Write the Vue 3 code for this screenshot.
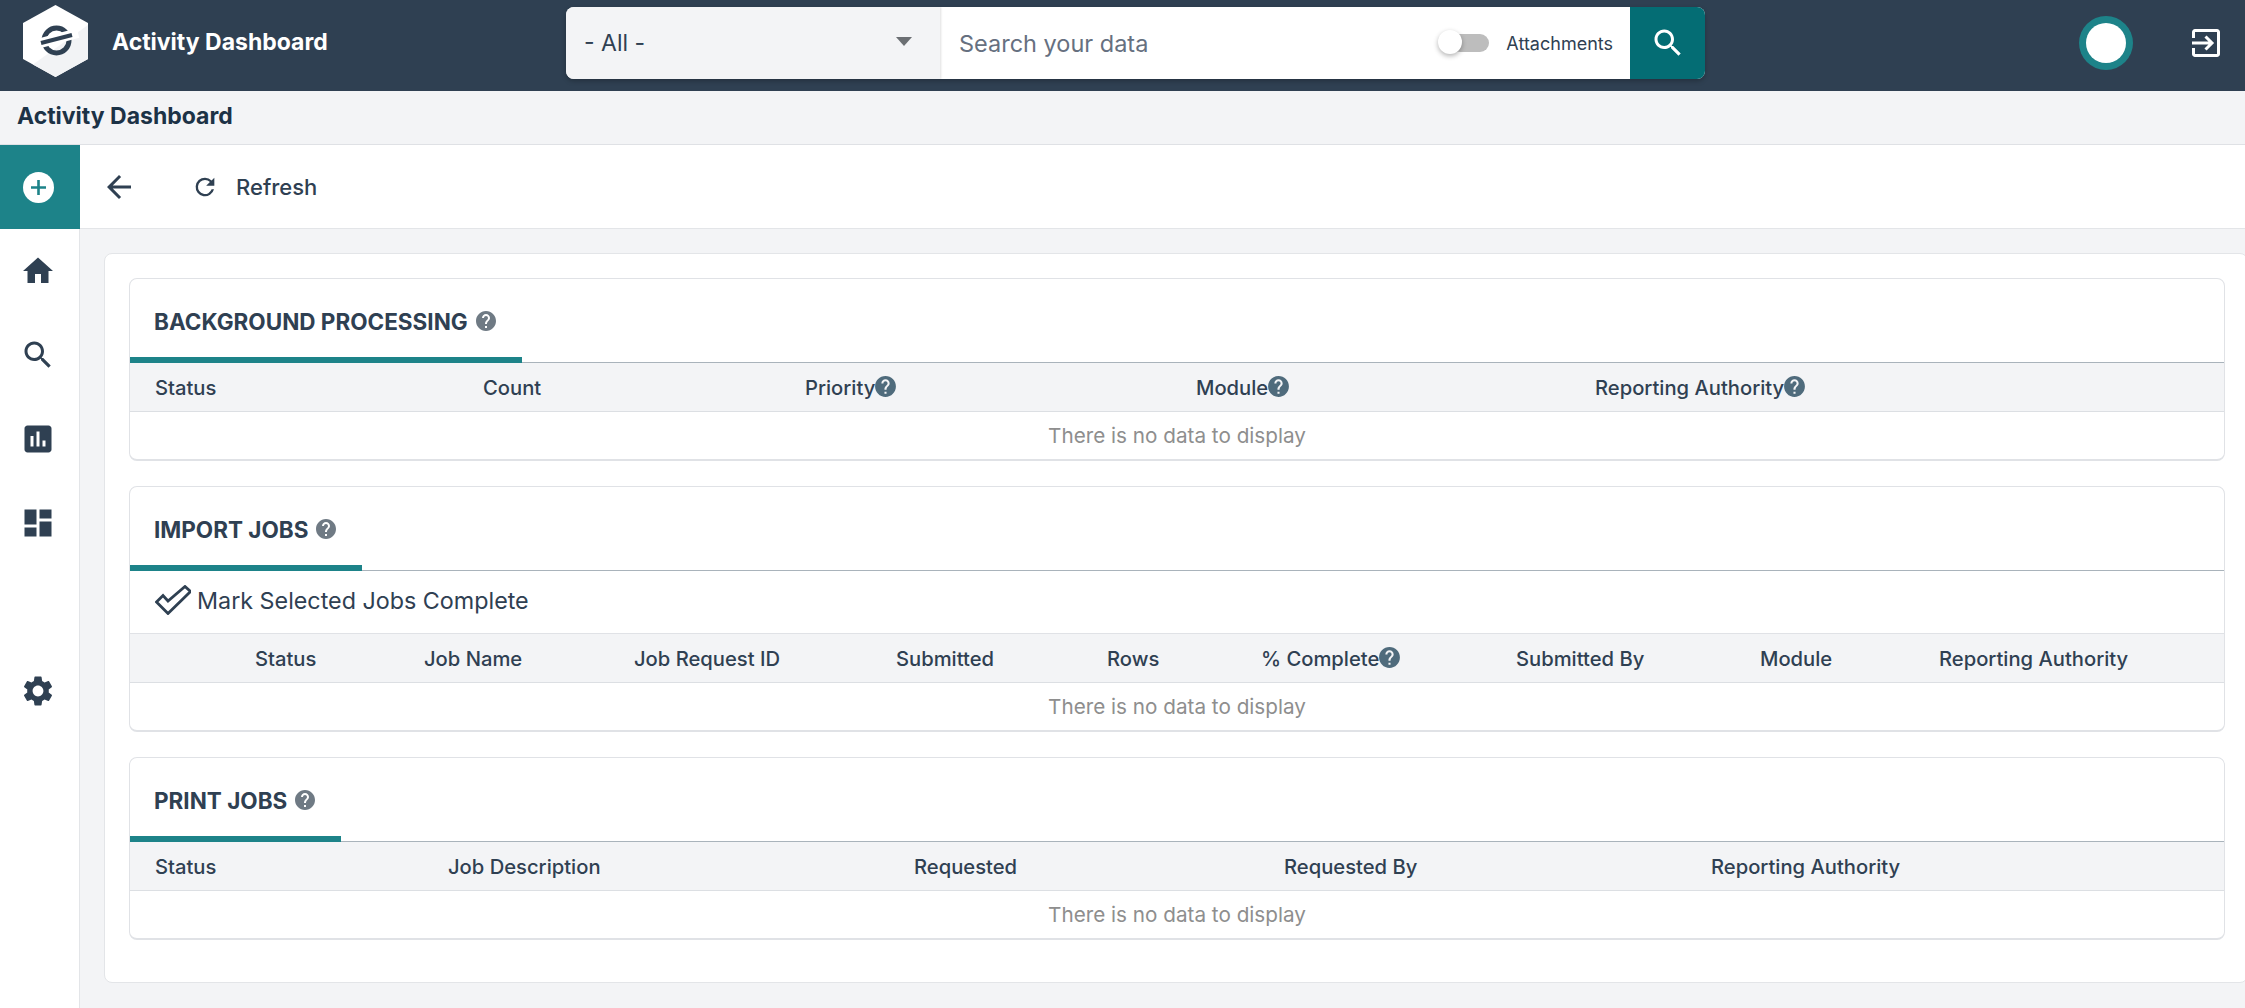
<template>
  <div class="page">
    <header class="topbar">
      <div class="brand">
        <svg class="logo" viewBox="0 0 65 72">
          <polygon points="32.5,0 65,18 65,54 32.5,72 0,54 0,18" fill="#ffffff" />
          <polygon points="65,20 10,59.5 32.5,72 65,54" fill="#f2f3f5" />
          <circle cx="33.5" cy="35.5" r="12.5" fill="none" stroke="#2f4052" stroke-width="5" />
          <path d="M12 39.5 L55 28" stroke="#ffffff" stroke-width="10" />
          <path d="M18 38 L49 30" stroke="#2f4052" stroke-width="4" />
        </svg>
        <span class="brand-name">Activity Dashboard</span>
      </div>
      <div class="searchbar">
        <div class="scope">
          <span>- All -</span>
          <span class="caret"></span>
        </div>
        <div class="query">
          <span class="placeholder">Search your data</span>
          <div class="toggle"><span class="thumb"></span></div>
          <span class="toggle-label">Attachments</span>
        </div>
        <button class="search-btn">
          <svg viewBox="0 0 24 24" width="36" height="36"><path :d="icons.search" fill="#fff" /></svg>
        </button>
      </div>
      <div class="user">
        <div class="avatar"><span></span></div>
        <svg class="logout" viewBox="0 0 28 28" fill="none" stroke="#fff" stroke-width="3">
          <path d="M1.5 9V3a1.5 1.5 0 0 1 1.5-1.5h22A1.5 1.5 0 0 1 26.5 3v22a1.5 1.5 0 0 1-1.5 1.5H3A1.5 1.5 0 0 1 1.5 25v-6" />
          <path d="M0 14h20M13.5 7.5 20 14l-6.5 6.5" />
        </svg>
      </div>
    </header>

    <div class="subhead">Activity Dashboard</div>

    <div class="body">
      <nav class="sidebar">
        <div class="nav-add">
          <svg viewBox="0 0 31 31" width="31" height="31">
            <circle cx="15.5" cy="15.5" r="15.5" fill="#fff" />
            <path d="M15.5 8v15M8 15.5h15" stroke="#1d8389" stroke-width="2.6" />
          </svg>
        </div>
        <div class="nav-item" v-for="n in navItems" :key="n.name" :class="{ gap: n.gap }">
          <svg viewBox="0 0 24 24" width="36" height="36"><path :d="icons[n.name]" fill="#2f4052" /></svg>
        </div>
      </nav>

      <div class="content">
        <div class="toolbar">
          <svg class="back" viewBox="0 0 24 24" width="36" height="36"><path d="M20 11H7.83l5.59-5.59L12 4l-8 8 8 8 1.41-1.41L7.83 13H20v-2z" fill="#2f4052" /></svg>
          <svg class="refresh" viewBox="0 0 24 24" width="28" height="28"><path d="M17.65 6.35A7.96 7.96 0 0 0 12 4a8 8 0 1 0 7.73 10h-2.08A6 6 0 1 1 12 6c1.66 0 3.14.69 4.22 1.78L13 11h7V4l-2.35 2.35z" fill="#2f4052" /></svg>
          <span class="refresh-label">Refresh</span>
        </div>

        <main class="main">
          <div class="outer">
            <section class="card" v-for="t in tables" :key="t.title">
              <div class="tab-head">
                <div class="tab">
                  <span class="tab-title">{{ t.title }}</span>
                  <svg viewBox="0 0 24 24" width="24" height="24"><path :d="icons.help" fill="#6f7a84" /></svg>
                </div>
              </div>
              <div class="actions" v-if="t.action">
                <svg viewBox="0 0 36 30" width="36" height="30" fill="none" stroke="#2f4052" stroke-width="2.8">
                  <path d="M1.5 17 L8 10.5 L13 16 L30 1.5 L35.5 6.5 L13 28.5 Z" />
                </svg>
                <span>{{ t.action }}</span>
              </div>
              <div class="thead" :class="t.cls">
                <div class="th" v-for="c in t.cols" :key="c.label">
                  {{ c.label }}<svg v-if="c.help" viewBox="0 0 24 24" width="25" height="25"><path :d="icons.help" fill="#4f6b7c" /></svg>
                </div>
              </div>
              <div class="empty">There is no data to display</div>
            </section>
          </div>
        </main>
      </div>
    </div>
  </div>
</template>

<script setup>
const icons = {
  home: 'M10 20v-6h4v6h5v-8h3L12 3 2 12h3v8z',
  search: 'M15.5 14h-.79l-.28-.27C15.41 12.59 16 11.11 16 9.5 16 5.91 13.09 3 9.5 3S3 5.91 3 9.5 5.91 16 9.5 16c1.61 0 3.09-.59 4.23-1.57l.27.28v.79l5 4.99L20.49 19l-4.99-5zm-6 0C7.01 14 5 11.99 5 9.5S7.01 5 9.5 5 14 7.01 14 9.5 11.99 14 9.5 14z',
  chart: 'M19 3H5c-1.1 0-2 .9-2 2v14c0 1.1.9 2 2 2h14c1.1 0 2-.9 2-2V5c0-1.1-.9-2-2-2zM9 17H7v-7h2v7zm4 0h-2V7h2v10zm4 0h-2v-4h2v4z',
  dashboard: 'M3 13h8V3H3v10zm0 8h8v-6H3v6zm10 0h8V11h-8v10zm0-18v6h8V3h-8z',
  settings: 'M19.14 12.94c.04-.3.06-.61.06-.94 0-.32-.02-.64-.07-.94l2.03-1.58c.18-.14.23-.41.12-.61l-1.92-3.32c-.12-.22-.37-.29-.59-.22l-2.39.96c-.5-.38-1.03-.7-1.62-.94l-.36-2.54c-.04-.24-.24-.41-.48-.41h-3.84c-.24 0-.43.17-.47.41l-.36 2.54c-.59.24-1.13.57-1.62.94l-2.39-.96c-.22-.08-.47 0-.59.22L2.74 8.87c-.12.21-.08.47.12.61l2.03 1.58c-.05.3-.09.63-.09.94s.02.64.07.94l-2.03 1.58c-.18.14-.23.41-.12.61l1.92 3.32c.12.22.37.29.59.22l2.39-.96c.5.38 1.03.7 1.62.94l.36 2.54c.05.24.24.41.48.41h3.84c.24 0 .44-.17.47-.41l.36-2.54c.59-.24 1.13-.56 1.62-.94l2.39.96c.22.08.47 0 .59-.22l1.92-3.32c.12-.22.07-.47-.12-.61l-2.01-1.58zM12 15.6c-1.98 0-3.6-1.62-3.6-3.6s1.62-3.6 3.6-3.6 3.6 1.62 3.6 3.6-1.62 3.6-3.6 3.6z',
  help: 'M12 2C6.48 2 2 6.48 2 12s4.48 10 10 10 10-4.48 10-10S17.52 2 12 2zm1 17h-2v-2h2v2zm2.07-7.75l-.9.92C13.45 12.9 13 13.5 13 15h-2v-.5c0-1.1.45-2.1 1.17-2.83l1.24-1.26c.37-.36.59-.86.59-1.41 0-1.1-.9-2-2-2s-2 .9-2 2H8c0-2.21 1.79-4 4-4s4 1.79 4 4c0 .88-.36 1.68-.93 2.25z',
}

const navItems = [
  { name: 'home' },
  { name: 'search' },
  { name: 'chart' },
  { name: 'dashboard' },
  { name: 'settings', gap: true },
]

const tables = [
  {
    title: 'BACKGROUND PROCESSING',
    cls: 'cols-bg',
    cols: [
      { label: 'Status' },
      { label: 'Count' },
      { label: 'Priority', help: true },
      { label: 'Module', help: true },
      { label: 'Reporting Authority', help: true },
    ],
  },
  {
    title: 'IMPORT JOBS',
    cls: 'cols-import',
    action: 'Mark Selected Jobs Complete',
    cols: [
      { label: 'Status' },
      { label: 'Job Name' },
      { label: 'Job Request ID' },
      { label: 'Submitted' },
      { label: 'Rows' },
      { label: '% Complete', help: true },
      { label: 'Submitted By' },
      { label: 'Module' },
      { label: 'Reporting Authority' },
    ],
  },
  {
    title: 'PRINT JOBS',
    cls: 'cols-print',
    cols: [
      { label: 'Status' },
      { label: 'Job Description' },
      { label: 'Requested' },
      { label: 'Requested By' },
      { label: 'Reporting Authority' },
    ],
  },
]
</script>

<style>
html, body {
  margin: 0;
  background: #f3f4f6;
}
</style>

<style scoped>
.page {
  height: 100vh;
  display: flex;
  flex-direction: column;
  overflow: hidden;
  font-family: Inter, "Liberation Sans", sans-serif;
  color: #2f4052;
  background: #f3f4f6;
}

.topbar {
  height: 91px;
  flex-shrink: 0;
  box-sizing: border-box;
  padding-bottom: 5px;
  display: flex;
  align-items: center;
  background: #2f4052;
}
.brand {
  width: 566px;
  display: flex;
  align-items: center;
  padding-left: 23px;
  box-sizing: border-box;
}
.logo {
  width: 65px;
  height: 72px;
  margin-top: -4px;
}
.brand-name {
  margin-left: 24px;
  margin-top: -2px;
  font-size: 23px;
  font-weight: 700;
  color: #fff;
}
.searchbar {
  width: 1139px;
  height: 72px;
  display: flex;
  border-radius: 8px;
  overflow: hidden;
  box-shadow: 0 2px 5px rgba(0, 0, 0, 0.25);
  background: #fff;
}
.scope {
  width: 374px;
  box-sizing: border-box;
  padding: 0 28px 0 18px;
  display: flex;
  align-items: center;
  justify-content: space-between;
  background: #f3f4f6;
  font-size: 23px;
  box-shadow: 1px 0 2px rgba(0, 0, 0, 0.12);
}
.caret {
  border-left: 8px solid transparent;
  border-right: 8px solid transparent;
  border-top: 9px solid #6b6f73;
  margin-top: -3px;
}
.query {
  flex: 1;
  display: flex;
  align-items: center;
  padding-left: 19px;
}
.placeholder {
  font-size: 23.5px;
  color: #667080;
  margin-right: auto;
}
.toggle {
  position: relative;
  width: 38px;
  height: 18px;
  border-radius: 9px;
  background: #bdbdbd;
  margin-right: 17px;
}
.thumb {
  position: absolute;
  left: -13px;
  top: -4px;
  width: 24px;
  height: 24px;
  border-radius: 50%;
  background: #fff;
  box-shadow: 0 2px 5px rgba(0, 0, 0, 0.3);
}
.toggle-label {
  font-size: 18px;
  margin-right: 17px;
}
.search-btn {
  width: 75px;
  border: none;
  padding: 0;
  background: #046d74;
  display: flex;
  align-items: center;
  justify-content: center;
}
.user {
  flex: 1;
  display: flex;
  align-items: center;
  padding-left: 374px;
}
.avatar {
  width: 54px;
  height: 54px;
  border-radius: 50%;
  background: #1d8389;
  display: flex;
  align-items: center;
  justify-content: center;
}
.avatar span {
  width: 40px;
  height: 40px;
  border-radius: 50%;
  background: #fff;
}
.logout {
  width: 28px;
  height: 28px;
  margin-left: 59px;
}

.subhead {
  flex-shrink: 0;
  box-sizing: border-box;
  height: 54px;
  padding: 0 0 3px 17px;
  display: flex;
  align-items: center;
  border-bottom: 1px solid #dfe1e5;
  font-size: 23px;
  font-weight: 700;
  color: #1c3246;
  background: #f3f4f6;
}

.body {
  flex: 1;
  display: flex;
  min-height: 0;
}
.sidebar {
  width: 80px;
  flex-shrink: 0;
  box-sizing: border-box;
  border-right: 1px solid #e3e5e8;
  background: #fff;
}
.nav-add {
  height: 84px;
  margin-right: -1px;
  padding-right: 3px;
  display: flex;
  align-items: center;
  justify-content: center;
  background: #1d8389;
}
.nav-item {
  height: 84px;
  padding-right: 3px;
  display: flex;
  align-items: center;
  justify-content: center;
}
.nav-item.gap {
  margin-top: 84px;
}

.content {
  flex: 1;
  min-width: 0;
  display: flex;
  flex-direction: column;
}
.toolbar {
  height: 83px;
  flex-shrink: 0;
  display: flex;
  align-items: center;
  padding-left: 21px;
  border-bottom: 1px solid #e3e5e8;
  background: #fff;
}
.refresh {
  margin-left: 54px;
}
.refresh-label {
  margin-left: 17px;
  font-size: 22px;
  font-weight: 500;
}

.main {
  flex: 1;
  padding: 24px 0 0 24px;
}
.outer {
  margin-right: -3px;
  padding: 24px 22px 42px 24px;
  display: flex;
  flex-direction: column;
  gap: 25px;
  border: 1px solid #e3e5e8;
  border-radius: 8px;
  background: #fff;
}

.card {
  border: 1px solid #e0e2e6;
  border-bottom-width: 2px;
  border-radius: 8px;
  overflow: hidden;
}
.tab-head {
  height: 83px;
  display: flex;
  align-items: flex-end;
  border-bottom: 1px solid #a9b3bb;
}
.tab {
  display: flex;
  align-items: center;
  gap: 6px;
  padding: 0 24px;
  height: 78px;
  box-sizing: border-box;
  border-bottom: 6px solid #1d8389;
  margin-bottom: -1px;
}
.tab-title {
  font-size: 22.5px;
  font-weight: 700;
}
.actions {
  height: 58px;
  padding: 0 0 4px 25px;
  display: flex;
  align-items: center;
  gap: 6px;
  border-bottom: 1px solid #e0e2e6;
  font-size: 23.3px;
}
.thead {
  display: grid;
  height: 47px;
  padding-top: 1px;
  align-items: center;
  background: #f3f4f6;
  border-bottom: 1px solid #dcdfe3;
  font-size: 20.2px;
  font-weight: 500;
}
.th {
  display: flex;
  align-items: center;
}
.th svg {
  margin-left: -2px;
  margin-top: -3px;
}
.cols-bg {
  padding-left: 25px;
  grid-template-columns: 328px 322px 391px 399px 1fr;
}
.cols-import {
  padding-left: 125px;
  grid-template-columns: 169px 210px 262px 211px 154px 255px 244px 179px 1fr;
}
.cols-print {
  padding-left: 25px;
  grid-template-columns: 293px 466px 370px 427px 1fr;
}
.empty {
  height: 47px;
  display: flex;
  align-items: center;
  justify-content: center;
  font-size: 20.7px;
  color: #8e8e8e;
}
</style>
